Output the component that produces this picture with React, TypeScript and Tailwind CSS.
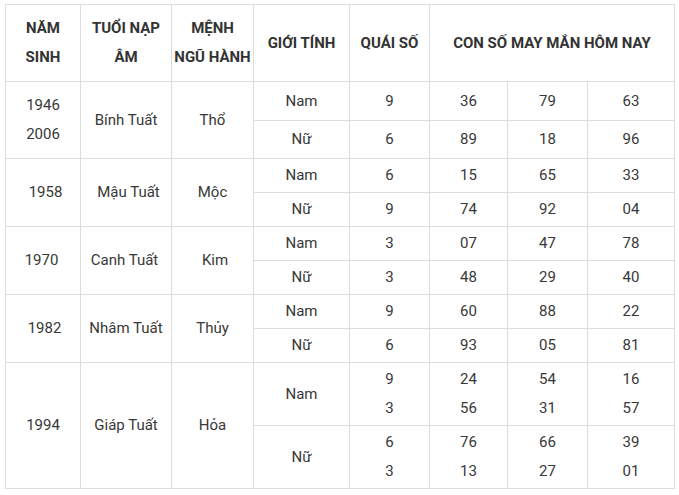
const groups = [
  {
    year: ["1946", "2006"],
    tuoi: "Bính Tuất",
    menh: "Thổ",
    rows: [
      { sex: "Nam", quai: ["9"], nums: [["36"], ["79"], ["63"]], h: "h-[39px]" },
      { sex: "Nữ", quai: ["6"], nums: [["89"], ["18"], ["96"]], h: "h-[38px]" },
    ],
  },
  {
    year: ["1958"],
    tuoi: "Mậu Tuất",
    menh: "Mộc",
    shift: ["pl-[5px]", "pl-[5px]", ""],
    rows: [
      { sex: "Nam", quai: ["6"], nums: [["15"], ["65"], ["33"]], h: "h-[34px]" },
      { sex: "Nữ", quai: ["9"], nums: [["74"], ["92"], ["04"]], h: "h-[34px]" },
    ],
  },
  {
    year: ["1970"],
    tuoi: "Canh Tuất",
    menh: "Kim",
    shift: ["pr-[3px]", "pr-[3px]", "pl-[5px]"],
    rows: [
      { sex: "Nam", quai: ["3"], nums: [["07"], ["47"], ["78"]], h: "h-[34px]" },
      { sex: "Nữ", quai: ["3"], nums: [["48"], ["29"], ["40"]], h: "h-[34px]" },
    ],
  },
  {
    year: ["1982"],
    tuoi: "Nhâm Tuất",
    menh: "Thủy",
    shift: ["pl-[3px]", "", ""],
    rows: [
      { sex: "Nam", quai: ["9"], nums: [["60"], ["88"], ["22"]], h: "h-[34px]" },
      { sex: "Nữ", quai: ["6"], nums: [["93"], ["05"], ["81"]], h: "h-[34px]" },
    ],
  },
  {
    year: ["1994"],
    tuoi: "Giáp Tuất",
    menh: "Hỏa",
    rows: [
      { sex: "Nam", quai: ["9", "3"], nums: [["24", "56"], ["54", "31"], ["16", "57"]], h: "h-[63px]" },
      { sex: "Nữ", quai: ["6", "3"], nums: [["76", "13"], ["66", "27"], ["39", "01"]], h: "h-[63px]" },
    ],
  },
];

function Lines({ items }: { items: string[] }) {
  return (
    <>
      {items.map((t, i) => (
        <div key={i}>{t}</div>
      ))}
    </>
  );
}

const td = "border border-[#dddddd] p-0 text-center align-middle";

export default function App() {
  return (
    <div className="min-h-screen bg-white pl-[5px] pt-[4px]" style={{ fontFamily: "Roboto, 'Liberation Sans', sans-serif" }}>
      <table className="table-fixed border-collapse w-[669px] text-[15px] leading-[29px] text-[#383838]">
        <colgroup>
          <col className="w-[75px]" />
          <col className="w-[91px]" />
          <col className="w-[82px]" />
          <col className="w-[96px]" />
          <col className="w-[80px]" />
          <col className="w-[78px]" />
          <col className="w-[80px]" />
          <col className="w-[87px]" />
        </colgroup>
        <thead>
          <tr className="h-[77px] font-bold text-[#333333]">
            <th className={td}>NĂM<br />SINH</th>
            <th className={td}>TUỔI NẠP<br />ÂM</th>
            <th className={td}>MỆNH<br />NGŨ HÀNH</th>
            <th className={td}>GIỚI TÍNH</th>
            <th className={td}>QUÁI SỐ</th>
            <th className={td} colSpan={3}>CON SỐ MAY MẮN HÔM NAY</th>
          </tr>
        </thead>
        <tbody>
          {groups.map((g) =>
            g.rows.map((r, ri) => (
              <tr key={g.year[0] + r.sex} className={r.h}>
                {ri === 0 && (
                  <>
                    <td className={`${td} ${g.shift?.[0] ?? ""}`} rowSpan={2}><Lines items={g.year} /></td>
                    <td className={`${td} ${g.shift?.[1] ?? ""}`} rowSpan={2}>{g.tuoi}</td>
                    <td className={`${td} ${g.shift?.[2] ?? ""}`} rowSpan={2}>{g.menh}</td>
                  </>
                )}
                <td className={td}>{r.sex}</td>
                <td className={td}><Lines items={r.quai} /></td>
                {r.nums.map((n, ni) => (
                  <td key={ni} className={td}><Lines items={n} /></td>
                ))}
              </tr>
            ))
          )}
        </tbody>
      </table>
    </div>
  );
}
